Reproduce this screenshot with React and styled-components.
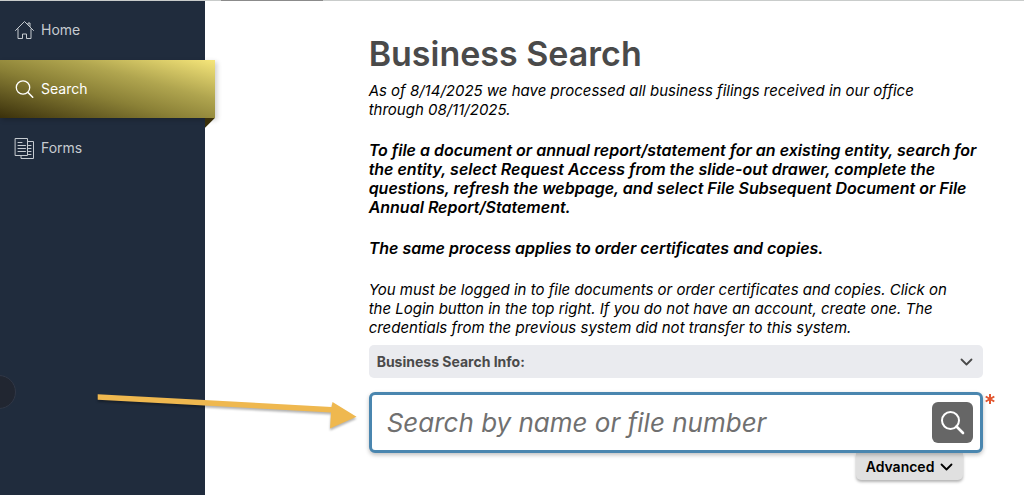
import styled, { createGlobalStyle } from "styled-components";

const GlobalStyle = createGlobalStyle`
* {
  box-sizing: border-box;
}
body {
  margin: 0;
  background-color: #ffffff;
  font-family: Inter, "Open Sans", sans-serif;
}
`

const Page = styled.div`
position: relative;
display: flex;
flex-direction: column;
min-height: 100vh;
overflow: hidden;
`

const TopStrip = styled.div`
height: 1px;
padding-left: 221px;
background-color: #c9cccb;
`

const TopStripTab = styled.div`
width: 102px;
height: 1px;
background-color: #8b8b8b;
`

const Layout = styled.div`
display: flex;
flex: 1;
`

const Sidebar = styled.nav`
position: relative;
display: flex;
flex-direction: column;
gap: 1px;
width: 20%;
flex-shrink: 0;
background-color: #202c3d;
`

const NavLink = styled.a`
position: relative;
display: flex;
align-items: center;
gap: 6px;
height: 58px;
padding-left: 14px;
margin-right: ${(props) => (props.$active ? "-10px" : "0")};
color: ${(props) => (props.$active ? "#ffffff" : "#c6cbd0")};
background: ${(props) => (props.$active ? "linear-gradient(to top right, #3a300b 0%, #8a8036 42%, #b0a54f 66%, #f6e67a 100%)" : "none")};
box-shadow: ${(props) => (props.$active ? "2px 2px 5px rgba(0, 0, 0, 0.2)" : "none")};
font-size: 14px;
line-height: 18px;
text-decoration: none;
`

const NavFold = styled.span`
position: absolute;
top: 100%;
right: 0;
width: 10px;
height: 10px;
background-color: #3a300b;
clip-path: polygon(0 0, 100% 0, 0 100%);
`

const NavIcon = styled.svg`
width: 21px;
height: 22px;
fill: none;
stroke: currentColor;
stroke-linecap: round;
stroke-linejoin: round;
`

const DrawerKnob = styled.span`
position: absolute;
top: 374px;
left: -18px;
width: 34px;
height: 34px;
border: 1px solid #303746;
border-radius: 50%;
background-color: #212631;
`

const Main = styled.main`
flex: 1;
min-width: 0;
padding: 32px 4% 14px 16%;
`

const Title = styled.h1`
margin: 0 0 6px;
color: #4a4a4a;
font-size: 34px;
line-height: 42px;
font-weight: 600;
`

const Notice = styled.p`
margin: 0 0 ${(props) => (props.$last ? "8px" : "22px")};
color: #000000;
font-size: ${(props) => (props.$strong ? "16px" : "15px")};
line-height: 19px;
font-style: italic;
font-weight: ${(props) => (props.$strong ? 600 : 400)};
`

const InfoToggle = styled.button`
display: flex;
align-items: center;
justify-content: space-between;
width: 100%;
height: 33px;
padding: 0 10px 0 8px;
margin-bottom: 14px;
border: none;
border-radius: 5px;
background-color: #eaebef;
color: #4a4a4a;
font-family: inherit;
font-size: 14px;
line-height: 18px;
font-weight: 700;
`

const Chevron = styled.svg`
width: 13px;
height: 8px;
fill: none;
stroke: currentColor;
stroke-width: 1.8;
stroke-linecap: round;
stroke-linejoin: round;
`

const SearchForm = styled.form`
position: relative;
display: flex;
flex-direction: column;
align-items: flex-end;
`

const SearchBox = styled.div`
display: flex;
align-items: center;
width: 100%;
height: 61px;
padding: 0 7px 0 15px;
border: 3px solid #4a86af;
border-radius: 6px;
background-color: #ffffff;
box-shadow: 0 2px 4px rgba(0, 0, 0, 0.25);
z-index: 1;
`

const SearchInput = styled.input`
flex: 1;
min-width: 0;
padding: 0;
border: none;
outline: none;
background: none;
font-family: inherit;
font-size: 26px;
line-height: 32px;
font-style: italic;
&::placeholder {
  color: #707070;
  opacity: 1;
}
`

const SearchButton = styled.button`
display: flex;
align-items: center;
justify-content: center;
width: 41px;
height: 41px;
padding: 0;
border: none;
border-radius: 6px;
background-color: #666666;
color: #ffffff;
`

const SearchButtonIcon = styled.svg`
width: 25px;
height: 25px;
fill: none;
stroke: currentColor;
stroke-width: 2;
stroke-linecap: round;
`

const RequiredMark = styled.svg`
position: absolute;
top: 2px;
left: calc(100% + 2px);
width: 10px;
height: 10px;
stroke: #e2562f;
stroke-width: 2;
`

const AdvancedButton = styled.button`
display: flex;
align-items: center;
justify-content: center;
gap: 6px;
width: 107px;
height: 27px;
padding: 0;
margin-right: 20px;
border: none;
border-radius: 0 0 5px 5px;
background-color: #e0e0e0;
box-shadow: 0 2px 3px rgba(0, 0, 0, 0.3);
color: #000000;
font-family: inherit;
font-size: 14px;
line-height: 18px;
font-weight: 600;
`

const Arrow = styled.svg`
position: absolute;
top: 388px;
left: 94px;
width: 268px;
height: 48px;
pointer-events: none;
filter: drop-shadow(0 2px 1px rgba(0, 0, 0, 0.3));
`

const ChevronDown = () => (
  <Chevron viewBox="0 0 13 8" aria-hidden="true">
    <path d="M1.5 1.5l5 5 5-5" />
  </Chevron>
)

const HomeIcon = () => (
  <NavIcon viewBox="0 0 21 22" aria-hidden="true">
    <path d="M1.5 11.5 10.5 2.5 19.5 11.5M4 10v9.5h4.5v-4.5h4v4.5H17V10M14 5.5V4h2v3.5" />
  </NavIcon>
)

const SearchIcon = () => (
  <NavIcon viewBox="0 0 21 22" aria-hidden="true">
    <circle cx="9" cy="9.5" r="6.7" strokeWidth="1.3" />
    <path d="M14 14.5l4.7 4.7" strokeWidth="1.6" />
  </NavIcon>
)

const FormsIcon = () => (
  <NavIcon viewBox="0 0 21 22" aria-hidden="true">
    <path d="M1.5 1.5h12v17h-12zM14 4.5h5.5v17H7V19M4 5.5h4M4 8.5h7.5M4 11.5h7.5M4 14.5h7.5M14.5 8.5H17M14.5 11.5H17M14.5 14.5H17M14.5 17.5H17" />
  </NavIcon>
)

const App = () => {
  return (
    <Page>
      <GlobalStyle />
      <TopStrip>
        <TopStripTab />
      </TopStrip>
      <Layout>
        <Sidebar>
          <NavLink href="#home"><HomeIcon />Home</NavLink>
          <NavLink href="#search" $active aria-current="page"><SearchIcon />Search<NavFold /></NavLink>
          <NavLink href="#forms"><FormsIcon />Forms</NavLink>
          <DrawerKnob />
        </Sidebar>
        <Main>
          <Title>Business Search</Title>
          <Notice>
            As of 8/14/2025 we have processed all business filings received in our office<br />
            through 08/11/2025.
          </Notice>
          <Notice $strong>
            To file a document or annual report/statement for an existing entity, search for<br />
            the entity, select Request Access from the slide-out drawer, complete the<br />
            questions, refresh the webpage, and select File Subsequent Document or File<br />
            Annual Report/Statement.
          </Notice>
          <Notice $strong>The same process applies to order certificates and copies.</Notice>
          <Notice $last>
            You must be logged in to file documents or order certificates and copies. Click on<br />
            the Login button in the top right. If you do not have an account, create one. The<br />
            credentials from the previous system did not transfer to this system.
          </Notice>
          <InfoToggle type="button" aria-expanded="false">Business Search Info:<ChevronDown /></InfoToggle>
          <SearchForm onSubmit={(e) => e.preventDefault()}>
            <SearchBox>
              <SearchInput type="text" aria-label="Search by name or file number" placeholder="Search by name or file number" required />
              <SearchButton type="submit" aria-label="Search">
                <SearchButtonIcon viewBox="0 0 25 25" aria-hidden="true">
                  <circle cx="10.5" cy="10.5" r="8.5" />
                  <path d="M16.5 16.5l6.5 6.5" strokeWidth="2.6" />
                </SearchButtonIcon>
              </SearchButton>
            </SearchBox>
            <RequiredMark viewBox="0 0 10 10" aria-hidden="true">
              <path d="M5 0v10M0.7 2.5l8.6 5M9.3 2.5l-8.6 5" />
            </RequiredMark>
            <AdvancedButton type="button">Advanced<ChevronDown /></AdvancedButton>
          </SearchForm>
        </Main>
      </Layout>
      <Arrow viewBox="0 0 268 48" aria-hidden="true">
        <path d="M3.7 6.3 237.5 19 238.5 14 262.5 28.7 236 40.5 237 24.5 3.7 11.7z" fill="#efb84f" />
      </Arrow>
    </Page>
  )
}

export default App;
